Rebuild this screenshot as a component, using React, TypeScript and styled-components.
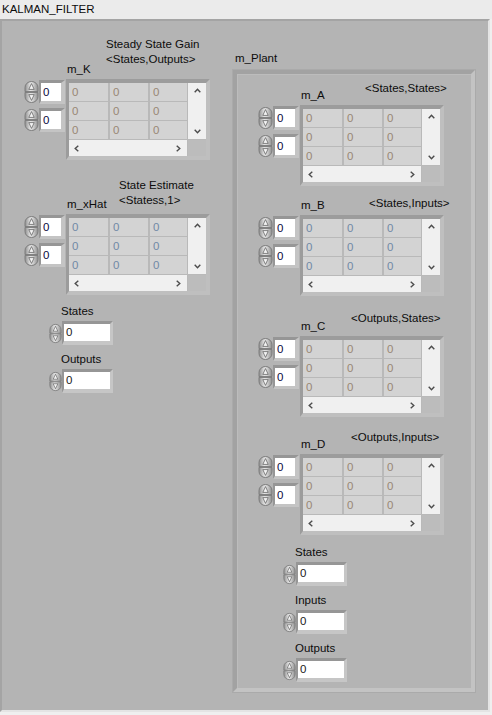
import * as React from 'react'
import styled, { createGlobalStyle } from 'styled-components'

const GlobalStyle = createGlobalStyle`
  html, body {
    margin: 0;
    padding: 0;
    background: #efefef;
  }
  body {
    font-family: 'Liberation Sans', Arial, sans-serif;
    font-size: 11.5px;
    color: #0c0c0c;
  }
`

type ArraySpec = {
  label: string
  caption: string[]
  capX: number
  drop: number
  mt: number
  tone: string
}

const BROWN = '#998775'
const BLUE = '#7189a6'

const leftArrays: ArraySpec[] = [
  { label: 'm_K', caption: ['Steady State Gain', '<States,Outputs>'], capX: 40, drop: 10, mt: 0, tone: BROWN },
  { label: 'm_xHat', caption: ['State Estimate', '<Statess,1>'], capX: 53, drop: 4, mt: 18, tone: BLUE }
]

const plantArrays: ArraySpec[] = [
  { label: 'm_A', caption: ['<States,States>'], capX: 65, drop: 7, mt: 0, tone: BROWN },
  { label: 'm_B', caption: ['<States,Inputs>'], capX: 69, drop: 2, mt: 10, tone: BLUE },
  { label: 'm_C', caption: ['<Outputs,States>'], capX: 51, drop: 8, mt: 15, tone: BROWN },
  { label: 'm_D', caption: ['<Outputs,Inputs>'], capX: 51, drop: 7, mt: 13, tone: BROWN }
]

// LabVIEW style increment / decrement button pair
const Spinner: React.FC<{ w: number; h: number }> = ({ w, h }) => (
  <svg width={w} height={h} viewBox="0 0 15 22">
    <defs>
      <linearGradient id="spin-g" x1="0" x2="1" y1="0" y2="0">
        <stop offset="0" stopColor="#8e8e8e" />
        <stop offset="0.4" stopColor="#e2e2e2" />
        <stop offset="0.6" stopColor="#d6d6d6" />
        <stop offset="1" stopColor="#8c8c8c" />
      </linearGradient>
    </defs>
    <path d="M1 10.6 V6.5 A6.5 6 0 0 1 14 6.5 V10.6 Z" fill="url(#spin-g)" stroke="#7c7c7c" strokeWidth="1" />
    <path d="M1 11.4 V15.5 A6.5 6 0 0 0 14 15.5 V11.4 Z" fill="url(#spin-g)" stroke="#7c7c7c" strokeWidth="1" />
    <path d="M7.5 2.6 L10.2 8.4 H4.8 Z" fill="#f4f4f4" stroke="#666666" strokeWidth="0.8" />
    <path d="M4.8 13.6 H10.2 L7.5 19.4 Z" fill="#f4f4f4" stroke="#666666" strokeWidth="0.8" />
  </svg>
)

const Chevron: React.FC<{ dir: 'up' | 'down' | 'left' | 'right' }> = ({ dir }) => {
  const d = {
    up: 'M0.7 4.3 L3.5 1.2 L6.3 4.3',
    down: 'M0.7 0.7 L3.5 3.8 L6.3 0.7',
    left: 'M4.3 0.7 L1.2 3.5 L4.3 6.3',
    right: 'M0.7 0.7 L3.8 3.5 L0.7 6.3'
  }[dir]
  const vertical = dir === 'up' || dir === 'down'
  return (
    <svg width={vertical ? 7 : 5} height={vertical ? 5 : 7} viewBox={vertical ? '0 0 7 5' : '0 0 5 7'}>
      <path d={d} fill="none" stroke="#4c4c4c" strokeWidth="1.4" />
    </svg>
  )
}

const ArrayControl: React.FC<{ spec: ArraySpec }> = ({ spec }) => (
  <ArrayBlock $mt={spec.mt}>
    <Header $capX={spec.capX}>
      <Label>{spec.label}</Label>
      <Caption $drop={spec.drop}>
        {spec.caption.map((line) => (
          <div key={line}>{line}</div>
        ))}
      </Caption>
    </Header>
    <Body>
      <IndexColumn>
        {[0, 1].map((i) => (
          <IndexRow key={i}>
            <Spinner w={15} h={22} />
            <IndexBox>0</IndexBox>
          </IndexRow>
        ))}
      </IndexColumn>
      <ArrayFrame>
        {Array.from({ length: 9 }).map((_, i) => (
          <Cell key={i} $tone={spec.tone}>0</Cell>
        ))}
        <VScroll>
          <Chevron dir="up" />
          <Chevron dir="down" />
        </VScroll>
        <HScroll>
          <Chevron dir="left" />
          <Chevron dir="right" />
        </HScroll>
        <Corner />
      </ArrayFrame>
    </Body>
  </ArrayBlock>
)

const NumControl: React.FC<{ label: string; mt: number }> = ({ label, mt }) => (
  <NumBlock $mt={mt}>
    <NumLabel>{label}</NumLabel>
    <NumRow>
      <Spinner w={13} h={21} />
      <NumBox>0</NumBox>
    </NumRow>
  </NumBlock>
)

const App: React.FC = () => {
  return (
    <>
      <GlobalStyle />
      <Window>
        <TitleBar>KALMAN_FILTER</TitleBar>
        <OuterPanel>
          <LeftColumn>
            {leftArrays.map((a) => (
              <ArrayControl key={a.label} spec={a} />
            ))}
            <NumControl label="States" mt={9} />
            <NumControl label="Outputs" mt={7} />
          </LeftColumn>
          <PlantSection>
            <PlantLabel>m_Plant</PlantLabel>
            <PlantPanel>
              {plantArrays.map((a) => (
                <ArrayControl key={a.label} spec={a} />
              ))}
              <NumControl label="States" mt={10} />
              <NumControl label="Inputs" mt={7} />
              <NumControl label="Outputs" mt={7} />
            </PlantPanel>
          </PlantSection>
        </OuterPanel>
      </Window>
    </>
  )
}

const Window = styled.div`
  width: 492px;
  height: 715px;
  background: #efefef;
  display: flex;
  flex-direction: column;
  overflow: hidden;
`

const TitleBar = styled.div`
  height: 19px;
  box-sizing: border-box;
  padding: 2px 0 0 2px;
  line-height: 15px;
  background: #ebebeb;
  color: #0c0c0c;
`

const OuterPanel = styled.div`
  height: 693px;
  margin-right: 2px;
  box-sizing: border-box;
  border-top: 2px solid #a4a4a4;
  border-left: 2px solid #a4a4a4;
  border-right: 2px solid #e4e4e4;
  border-bottom: 2px solid #e4e4e4;
  background: #b4b4b4;
  display: flex;
`

const LeftColumn = styled.div`
  width: 231px;
  box-sizing: border-box;
  padding: 16px 0 0 22px;
  display: flex;
  flex-direction: column;
  align-items: flex-start;
`

const PlantSection = styled.div`
  display: flex;
  flex-direction: column;
  padding-top: 30px;
`

const PlantLabel = styled.div`
  line-height: 15px;
  padding-left: 2px;
  margin-bottom: 4px;
`

const PlantPanel = styled.div`
  width: 242px;
  height: 622px;
  box-sizing: border-box;
  border-top: 4px solid #a2a2a2;
  border-left: 4px solid #a2a2a2;
  border-right: 4px solid #c3c3c3;
  border-bottom: 4px solid #c3c3c3;
  box-shadow: inset 1px 1px 0 #bcbcbc, 0 0 0 1px #aaaaaa;
  padding: 7px 0 0 21px;
  display: flex;
  flex-direction: column;
  align-items: flex-start;
`

const ArrayBlock = styled.div<{ $mt: number }>`
  margin-top: ${(p) => p.$mt}px;
  display: flex;
  flex-direction: column;
`

const Header = styled.div<{ $capX: number }>`
  display: grid;
  grid-template-columns: ${(p) => p.$capX}px auto;
  align-items: end;
  padding-left: 42px;
  margin-bottom: 2px;
  line-height: 15px;
`

const Label = styled.div`
  padding-left: 1px;
  white-space: nowrap;
`

const Caption = styled.div<{ $drop: number }>`
  margin-bottom: ${(p) => p.$drop}px;
  white-space: nowrap;
`

const Body = styled.div`
  display: flex;
`

const IndexColumn = styled.div`
  width: 42px;
  padding-top: 1px;
  display: flex;
  flex-direction: column;
  gap: 4px;
`

const IndexRow = styled.div`
  display: flex;
  align-items: center;
  height: 24px;
`

const IndexBox = styled.div`
  width: 18px;
  height: 18px;
  padding-left: 2px;
  background: #ffffff;
  border-top: 3px solid #969696;
  border-left: 2px solid #969696;
  border-right: 4px solid #c4c4c4;
  border-bottom: 3px solid #c4c4c4;
  line-height: 18px;
  color: #0a0a40;
`

const ArrayFrame = styled.div`
  display: grid;
  grid-template-columns: 39px 38px 37px 17px;
  grid-template-rows: 18px 18px 18px 16px;
  column-gap: 2px;
  row-gap: 1px;
  background: #b9b9b9;
  border-top: 4px solid #9c9c9c;
  border-left: 3px solid #9c9c9c;
  border-right: 4px solid #bfbfbf;
  border-bottom: 4px solid #bfbfbf;
`

const Cell = styled.div<{ $tone: string }>`
  background: #d3d3d3;
  color: ${(p) => p.$tone};
  line-height: 18px;
  padding-left: 3px;
`

const VScroll = styled.div`
  grid-column: 4;
  grid-row: 1 / 4;
  margin-left: -1px;
  background: #f0f0f0;
  display: flex;
  flex-direction: column;
  justify-content: space-between;
  align-items: center;
  padding: 5px 0;
`

const HScroll = styled.div`
  grid-column: 1 / 4;
  grid-row: 4;
  background: #f0f0f0;
  display: flex;
  justify-content: space-between;
  align-items: center;
  padding: 0 6px 0 5px;
`

const Corner = styled.div`
  grid-column: 4;
  grid-row: 4;
  margin-left: -1px;
  background: #bcbcbc;
`

const NumBlock = styled.div<{ $mt: number }>`
  margin-top: ${(p) => p.$mt}px;
  margin-left: 25px;
  display: flex;
  flex-direction: column;
`

const NumLabel = styled.div`
  line-height: 15px;
  padding-left: 12px;
  margin-bottom: 2px;
`

const NumRow = styled.div`
  display: flex;
  align-items: center;
`

const NumBox = styled.div`
  width: 44px;
  height: 17px;
  padding-left: 2px;
  background: #ffffff;
  border-top: 3px solid #969696;
  border-left: 2px solid #969696;
  border-right: 3px solid #c6c6c6;
  border-bottom: 4px solid #c6c6c6;
  line-height: 17px;
  color: #1a1a1a;
`

export default App
